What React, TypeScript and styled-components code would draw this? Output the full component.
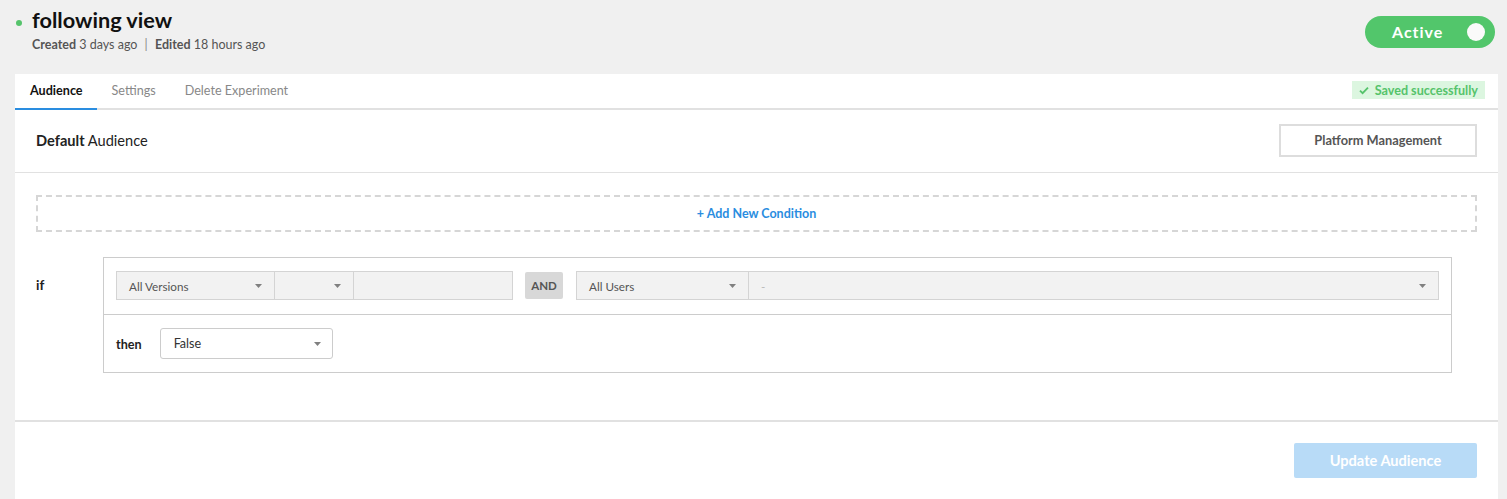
import * as React from 'react';
import styled, { createGlobalStyle } from 'styled-components';

const GlobalStyle = createGlobalStyle`
  html, body {
    margin: 0;
    padding: 0;
    background: #f0f0f0;
    font-family: Lato, "Liberation Sans", sans-serif;
    color: #333;
  }
`;

const Caret = () => (
  <svg width="7" height="4" viewBox="0 0 7 4">
    <path d="M0 0h7L3.5 4z" fill="#808080" />
  </svg>
);

const Check = () => (
  <svg width="10" height="9" viewBox="0 0 10 9">
    <path d="M1 4.6l2.6 2.6L9 1.6" fill="none" stroke="#55c36b" strokeWidth="1.8" />
  </svg>
);

const tabs = ['Audience', 'Settings', 'Delete Experiment'];

export default function App() {
  const [active, setActive] = React.useState(0);
  return (
    <Page>
      <GlobalStyle />
      <Header>
        <TitleBlock>
          <TitleRow>
            <StatusDot />
            <Title>following view</Title>
          </TitleRow>
          <Meta>
            <b>Created</b> 3 days ago <Sep>|</Sep> <b>Edited</b> 18 hours ago
          </Meta>
        </TitleBlock>
        <Toggle>
          <span>Active</span>
          <Knob />
        </Toggle>
      </Header>

      <Card>
        <TabBar>
          <Tabs>
            {tabs.map((t, i) => (
              <Tab key={t} $active={i === active} onClick={() => setActive(i)}>
                {t}
              </Tab>
            ))}
          </Tabs>
          <Saved>
            <Check />
            Saved successfully
          </Saved>
        </TabBar>

        <SectionHead>
          <SectionTitle>
            <b>Default</b> Audience
          </SectionTitle>
          <OutlineButton>Platform Management</OutlineButton>
        </SectionHead>

        <Body>
          <AddCondition>+ Add New Condition</AddCondition>

          <RuleRow>
            <RuleLabel>if</RuleLabel>
            <RuleBox>
              <IfLine>
                <Field $w={159}>
                  All Versions
                  <Caret />
                </Field>
                <Field $w={79}>
                  <span />
                  <Caret />
                </Field>
                <Field $w={159} />
                <AndBadge>AND</AndBadge>
                <Field $w={173}>
                  All Users
                  <Caret />
                </Field>
                <Field $grow $muted>
                  -
                  <Caret />
                </Field>
              </IfLine>
              <ThenLine>
                <ThenLabel>then</ThenLabel>
                <WhiteSelect>
                  False
                  <Caret />
                </WhiteSelect>
              </ThenLine>
            </RuleBox>
          </RuleRow>
        </Body>

        <Footer>
          <PrimaryButton disabled>Update Audience</PrimaryButton>
        </Footer>
      </Card>
    </Page>
  );
}

const Page = styled.div`
  padding: 0 9px 0 15px;
`;

const Header = styled.div`
  display: flex;
  justify-content: space-between;
  align-items: flex-start;
  height: 74px;
`;

const TitleBlock = styled.div`
  padding-top: 8px;
`;

const TitleRow = styled.div`
  display: flex;
  align-items: center;
  gap: 10px;
`;

const StatusDot = styled.span`
  width: 6px;
  height: 6px;
  border-radius: 50%;
  background: #55c36b;
  margin: 5px 0 0 1px;
`;

const Title = styled.h1`
  margin: 0;
  font-size: 21.7px;
  font-weight: 700;
  color: #111;
  line-height: 24px;
`;

const Meta = styled.div`
  margin: 5px 0 0 17px;
  font-size: 12.5px;
  color: #555;
  b {
    font-weight: 700;
  }
`;

const Sep = styled.span`
  margin: 0 4px;
  color: #888;
`;

const Toggle = styled.div`
  margin: 16px 3px 0 0;
  width: 130px;
  height: 32px;
  border-radius: 16px;
  background: #52c66b;
  display: flex;
  align-items: center;
  justify-content: space-between;
  box-sizing: border-box;
  padding: 0 10px 2px 27px;
  color: #fff;
  font-size: 16px;
  font-weight: 700;
  letter-spacing: 1px;
`;

const Knob = styled.span`
  width: 18px;
  height: 18px;
  margin-top: 2px;
  border-radius: 50%;
  background: #fafafa;
`;

const Card = styled.div`
  background: #fff;
`;

const TabBar = styled.div`
  display: flex;
  justify-content: space-between;
  align-items: center;
  box-sizing: border-box;
  height: 36px;
  padding-bottom: 2px;
  border-bottom: 2px solid #e1e1e1;
  padding-right: 13px;
`;

const Tabs = styled.div`
  display: flex;
  height: 100%;
`;

const Tab = styled.div<{ $active: boolean }>`
  display: flex;
  align-items: center;
  box-sizing: border-box;
  padding: 0 14.5px 2px 15px;
  font-size: 12.6px;
  color: ${p => (p.$active ? '#111' : '#888')};
  font-weight: ${p => (p.$active ? 700 : 400)};
  border-bottom: 2px solid ${p => (p.$active ? '#2a8de0' : 'transparent')};
  margin-bottom: -4px;
  cursor: pointer;
  & + & {
    padding-left: 14.5px;
  }
`;

const Saved = styled.div`
  display: flex;
  align-items: center;
  gap: 6px;
  height: 18px;
  padding: 0 7px;
  background: #dcf6e0;
  color: #55c36b;
  font-size: 12.6px;
  font-weight: 700;
`;

const SectionHead = styled.div`
  display: flex;
  justify-content: space-between;
  align-items: center;
  height: 62px;
  padding: 0 21px;
  border-bottom: 1px solid #e1e1e1;
`;

const SectionTitle = styled.div`
  font-size: 14.6px;
  color: #222;
  margin-top: -2px;
  b {
    font-weight: 700;
  }
`;

const OutlineButton = styled.button`
  width: 198px;
  height: 33px;
  margin-top: -2px;
  background: #fff;
  border: 2px solid #ddd;
  font-family: inherit;
  font-size: 12.8px;
  font-weight: 700;
  color: #555;
`;

const Body = styled.div`
  padding: 22px 21px 47px;
  border-bottom: 2px solid #e1e1e1;
`;

const AddCondition = styled.div`
  height: 33px;
  border: 2px dashed #d6d6d6;
  display: flex;
  align-items: center;
  justify-content: center;
  color: #2a8de0;
  font-size: 12.5px;
  font-weight: 700;
`;

const RuleRow = styled.div`
  display: flex;
  margin-top: 25px;
  padding-right: 25px;
`;

const RuleLabel = styled.div`
  width: 67px;
  padding-top: 20px;
  font-size: 13.5px;
  font-weight: 700;
  color: #222;
`;

const RuleBox = styled.div`
  flex: 1;
  border: 1px solid #ccc;
`;

const IfLine = styled.div`
  display: flex;
  align-items: center;
  padding: 13px 12px 14px;
  border-bottom: 1px solid #ccc;
`;

const Field = styled.div<{ $w?: number; $grow?: boolean; $muted?: boolean }>`
  box-sizing: border-box;
  width: ${p => (p.$w ? `${p.$w}px` : 'auto')};
  flex: ${p => (p.$grow ? 1 : 'none')};
  height: 29px;
  display: flex;
  align-items: center;
  justify-content: space-between;
  padding: 0 12px;
  background: #f2f2f2;
  border: 1px solid #d4d4d4;
  font-size: 11.7px;
  color: ${p => (p.$muted ? '#bbb' : '#555')};
  & + & {
    border-left: none;
  }
`;

const AndBadge = styled.div`
  height: 27px;
  width: 38px;
  margin: 0 13px 0 12px;
  background: #d8d8d8;
  display: flex;
  align-items: center;
  justify-content: center;
  font-size: 11.5px;
  font-weight: 700;
  color: #555;
  border-radius: 2px;
`;

const ThenLine = styled.div`
  display: flex;
  align-items: center;
  height: 57px;
  padding: 0 12px;
  gap: 18px;
`;

const ThenLabel = styled.div`
  font-size: 12.6px;
  font-weight: 700;
  color: #222;
  margin-top: 2px;
`;

const WhiteSelect = styled.div`
  box-sizing: border-box;
  width: 173px;
  height: 31px;
  display: flex;
  align-items: center;
  justify-content: space-between;
  padding: 0 11px 0 13px;
  border: 1px solid #ccc;
  border-radius: 3px;
  font-size: 12.6px;
  color: #333;
`;

const Footer = styled.div`
  display: flex;
  justify-content: flex-end;
  padding: 21px 21px 22px;
`;

const PrimaryButton = styled.button`
  width: 183px;
  height: 35px;
  border: none;
  border-radius: 2px;
  background: #b8dbf7;
  color: #fff;
  font-family: inherit;
  font-size: 14.6px;
  font-weight: 700;
`;
